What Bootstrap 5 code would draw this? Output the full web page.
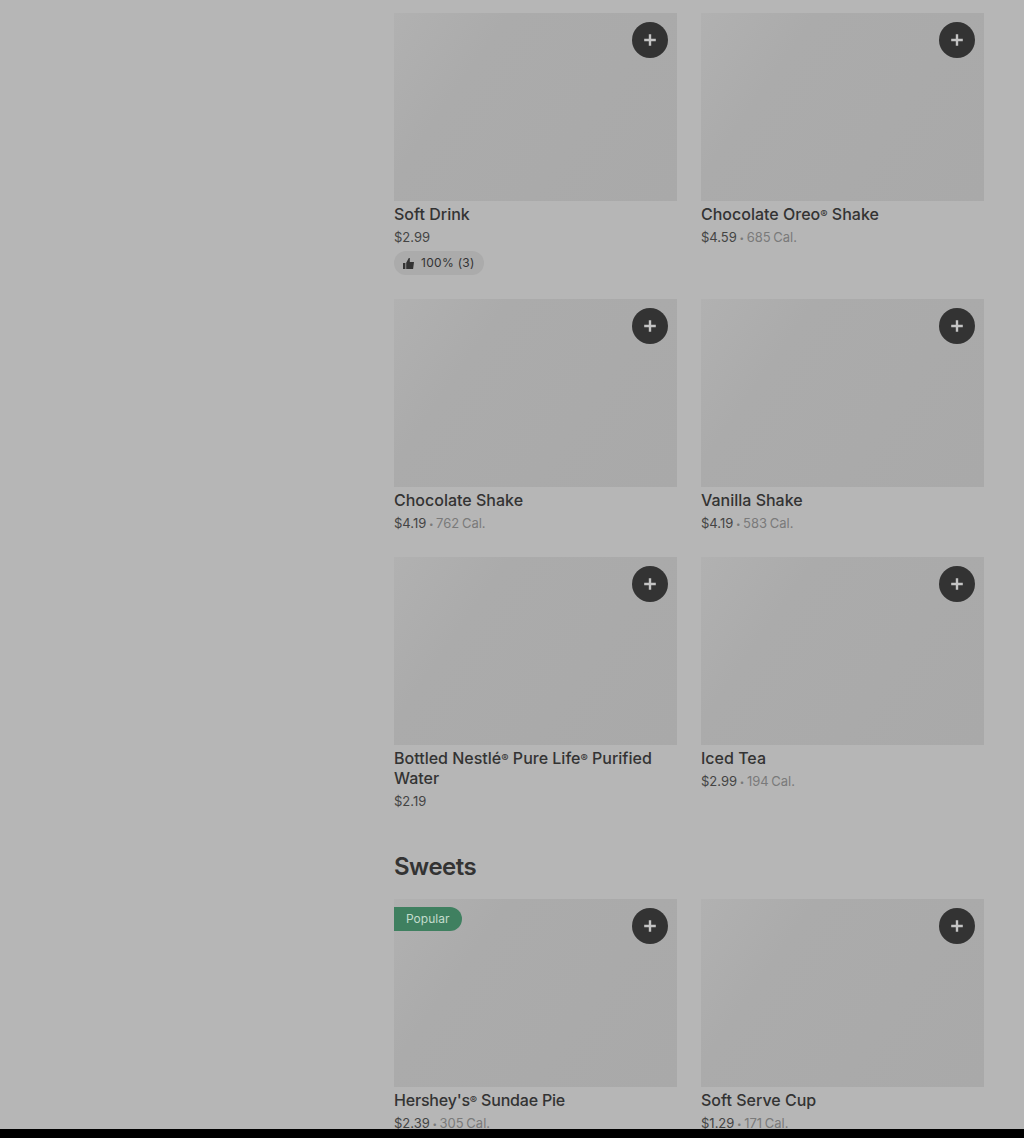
<!DOCTYPE html>
<html lang="en">
<head>
<meta charset="utf-8">
<title>Menu</title>
<link href="https://cdn.jsdelivr.net/npm/bootstrap@5.3.0/dist/css/bootstrap.min.css" rel="stylesheet">
<style>
html,body{height:100%;}
body{background:#b6b6b6;font-family:"Inter","Liberation Sans",sans-serif;color:#333;}
.page-shell{height:1138px;overflow:hidden;}
.menu-scroll{min-height:0;overflow:hidden;padding:13px 40px 0 394px;}
.menu-thumb{height:188px;background:linear-gradient(125deg,#b1b1b1 0%,#ababab 28%,#a9a9a9 100%);}
.add-btn{top:9px;right:9px;width:36px;height:36px;background:#333;border:0;padding:0;}
.popular-tag{top:8px;left:0;height:24px;width:68px;background:#3f8060;color:#c4dccd;font-size:12px;line-height:24px;border-radius:0 12px 12px 0;padding-left:12px;}
.item-name{margin:3px 0 0;font-size:16px;line-height:20px;font-weight:500;color:#333;}
.name-tight{letter-spacing:-.2px;}
.reg-mark{font-size:11px;line-height:1;vertical-align:2px;}
.item-meta{margin-top:3px;font-size:13px;line-height:20px;color:#444;word-spacing:-1px;}
.item-cal{color:#7a7a7a;}
.meta-dot{font-size:8px;line-height:1;vertical-align:1px;}
.rating-pill{margin-top:4px;width:90px;height:24px;padding:0 8px;border-radius:12px;background:#ababab;font-size:12px;letter-spacing:.3px;color:#333;gap:6px;}
.section-title{margin:40px 0 16px;font-size:24px;line-height:32px;font-weight:600;letter-spacing:-.5px;color:#333;}
.bottom-bar{height:9px;background:#000;flex:none;}
</style>
</head>
<body>
<div class="page-shell d-flex flex-column">
<main class="menu-scroll flex-grow-1">
  <div class="row g-4">
    <div class="col-6">
      <div class="menu-thumb position-relative"><button class="add-btn btn rounded-circle position-absolute d-flex align-items-center justify-content-center" aria-label="Add"><svg width="14" height="14" viewBox="0 0 14 14"><path d="M5.8 1.2h2.4v4.6h4.6v2.4H8.2v4.6H5.8V8.2H1.2V5.8h4.6z" fill="#c4c4c4"/></svg></button></div>
      <h3 class="item-name">Soft Drink</h3>
      <div class="item-meta">$2.99</div>
      <div class="rating-pill d-flex align-items-center"><svg width="13" height="13" viewBox="0 0 13 13"><path d="M1 6h2.4v6H1zM4.2 12V5.8L6.8 1h1v4h4.2l-.9 7z" fill="#333"/></svg><span>100% (3)</span></div>
    </div>
    <div class="col-6">
      <div class="menu-thumb position-relative"><button class="add-btn btn rounded-circle position-absolute d-flex align-items-center justify-content-center" aria-label="Add"><svg width="14" height="14" viewBox="0 0 14 14"><path d="M5.8 1.2h2.4v4.6h4.6v2.4H8.2v4.6H5.8V8.2H1.2V5.8h4.6z" fill="#c4c4c4"/></svg></button></div>
      <h3 class="item-name">Chocolate Oreo<span class="reg-mark">®</span> Shake</h3>
      <div class="item-meta">$4.59 <span class="item-cal"><span class="meta-dot">•</span> 685 Cal.</span></div>
    </div>
    <div class="col-6">
      <div class="menu-thumb position-relative"><button class="add-btn btn rounded-circle position-absolute d-flex align-items-center justify-content-center" aria-label="Add"><svg width="14" height="14" viewBox="0 0 14 14"><path d="M5.8 1.2h2.4v4.6h4.6v2.4H8.2v4.6H5.8V8.2H1.2V5.8h4.6z" fill="#c4c4c4"/></svg></button></div>
      <h3 class="item-name">Chocolate Shake</h3>
      <div class="item-meta">$4.19 <span class="item-cal"><span class="meta-dot">•</span> 762 Cal.</span></div>
    </div>
    <div class="col-6">
      <div class="menu-thumb position-relative"><button class="add-btn btn rounded-circle position-absolute d-flex align-items-center justify-content-center" aria-label="Add"><svg width="14" height="14" viewBox="0 0 14 14"><path d="M5.8 1.2h2.4v4.6h4.6v2.4H8.2v4.6H5.8V8.2H1.2V5.8h4.6z" fill="#c4c4c4"/></svg></button></div>
      <h3 class="item-name">Vanilla Shake</h3>
      <div class="item-meta">$4.19 <span class="item-cal"><span class="meta-dot">•</span> 583 Cal.</span></div>
    </div>
    <div class="col-6">
      <div class="menu-thumb position-relative"><button class="add-btn btn rounded-circle position-absolute d-flex align-items-center justify-content-center" aria-label="Add"><svg width="14" height="14" viewBox="0 0 14 14"><path d="M5.8 1.2h2.4v4.6h4.6v2.4H8.2v4.6H5.8V8.2H1.2V5.8h4.6z" fill="#c4c4c4"/></svg></button></div>
      <h3 class="item-name">Bottled Nestlé<span class="reg-mark">®</span> Pure Life<span class="reg-mark">®</span> Purified Water</h3>
      <div class="item-meta">$2.19</div>
    </div>
    <div class="col-6">
      <div class="menu-thumb position-relative"><button class="add-btn btn rounded-circle position-absolute d-flex align-items-center justify-content-center" aria-label="Add"><svg width="14" height="14" viewBox="0 0 14 14"><path d="M5.8 1.2h2.4v4.6h4.6v2.4H8.2v4.6H5.8V8.2H1.2V5.8h4.6z" fill="#c4c4c4"/></svg></button></div>
      <h3 class="item-name">Iced Tea</h3>
      <div class="item-meta">$2.99 <span class="item-cal"><span class="meta-dot">•</span> 194 Cal.</span></div>
    </div>
  </div>
  <h2 class="section-title">Sweets</h2>
  <div class="row g-4">
    <div class="col-6">
      <div class="menu-thumb position-relative"><span class="popular-tag position-absolute">Popular</span><button class="add-btn btn rounded-circle position-absolute d-flex align-items-center justify-content-center" aria-label="Add"><svg width="14" height="14" viewBox="0 0 14 14"><path d="M5.8 1.2h2.4v4.6h4.6v2.4H8.2v4.6H5.8V8.2H1.2V5.8h4.6z" fill="#c4c4c4"/></svg></button></div>
      <h3 class="item-name name-tight">Hershey's<span class="reg-mark">®</span> Sundae Pie</h3>
      <div class="item-meta">$2.39 <span class="item-cal"><span class="meta-dot">•</span> 305 Cal.</span></div>
    </div>
    <div class="col-6">
      <div class="menu-thumb position-relative"><button class="add-btn btn rounded-circle position-absolute d-flex align-items-center justify-content-center" aria-label="Add"><svg width="14" height="14" viewBox="0 0 14 14"><path d="M5.8 1.2h2.4v4.6h4.6v2.4H8.2v4.6H5.8V8.2H1.2V5.8h4.6z" fill="#c4c4c4"/></svg></button></div>
      <h3 class="item-name">Soft Serve Cup</h3>
      <div class="item-meta">$1.29 <span class="item-cal"><span class="meta-dot">•</span> 171 Cal.</span></div>
    </div>
  </div>
</main>
<div class="bottom-bar"></div>
</div>
<script src="https://cdn.jsdelivr.net/npm/bootstrap@5.3.0/dist/js/bootstrap.bundle.min.js"></script>
</body>
</html>
